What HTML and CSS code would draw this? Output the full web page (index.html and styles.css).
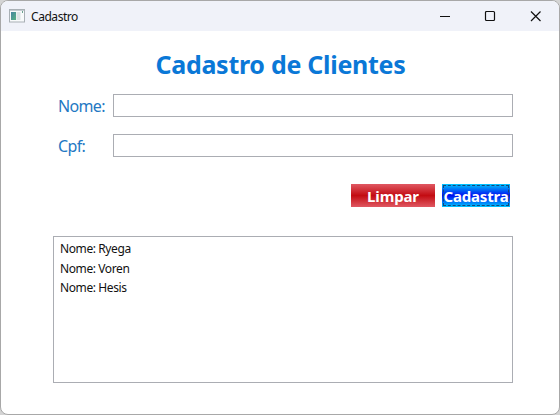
FILE: index.html
```html
<!DOCTYPE html>
<html lang="pt-BR">
<head>
<meta charset="utf-8">
<title>Cadastro</title>
<link rel="stylesheet" href="styles.css">
</head>
<body>
<div class="window">
  <header class="titlebar">
    <svg class="app-icon" width="16" height="14" viewBox="0 0 16 14">
      <defs><linearGradient id="pane" x1="0" y1="0" x2="1" y2="1"><stop offset="0" stop-color="#4584a0"/><stop offset="1" stop-color="#58b283"/></linearGradient></defs>
      <rect x=".5" y=".5" width="15" height="12.5" fill="#f8fafb" stroke="#a9b0b5"/>
      <path d="M1 1.5h14" stroke="#c3cbd0"/>
      <rect x="2" y="3" width="5" height="8" fill="url(#pane)"/>
      <rect x="7.5" y="3" width="4" height="8" fill="#dce3e5"/>
      <path d="M13.5 2v2" stroke="#6aa18f"/>
    </svg>
    <span class="caption">Cadastro</span>
    <svg class="controls" width="104" height="12" viewBox="0 0 104 12">
      <path class="glyph" d="M0 6.5h10"/>
      <rect class="glyph" x="45.5" y="1.5" width="9" height="9" rx="1"/>
      <path class="glyph" d="M91 1.500l9.500 9.500M100.500 1.500l-9.500 9.500"/>
    </svg>
  </header>
  <main class="form">
    <h1>Cadastro de Clientes</h1>
    <div class="field"><label for="nome">Nome:</label><input id="nome" type="text"></div>
    <div class="field"><label for="cpf">Cpf:</label><input id="cpf" type="text"></div>
    <div class="actions">
      <button class="clear">Limpar</button>
      <button class="submit"><span>Cadastra</span></button>
    </div>
    <ul class="list">
      <li>Nome: Ryega</li>
      <li>Nome: Voren</li>
      <li>Nome: Hesis</li>
    </ul>
  </main>
</div>
</body>
</html>
```
FILE: styles.css
```css
* { box-sizing: border-box; }
body { margin: 0; background: #d4d4d4; font-family: "Noto Sans", "Open Sans", sans-serif; }
.window { width: 560px; height: 415px; border: 1px solid #a8a8a8; border-radius: 8px; background: #fff; overflow: hidden; }
.titlebar { display: flex; align-items: center; height: 30px; padding: 0 15px 0 8px; background: #f0f2f9; }
.caption { margin-left: 6px; font-size: 12px; letter-spacing: -0.45px; color: #111; }
.controls { margin-left: auto; }
.glyph { fill: none; stroke: #111; stroke-width: 1.2; }
.form { padding: 15px 46px 0 52px; }
h1 { margin: 0 0 12px; padding-right: 5px; height: 36px; line-height: 36px; font-size: 25px; font-weight: 700; letter-spacing: -0.28px; text-align: center; white-space: nowrap; color: #0a78d7; }
.field { display: flex; align-items: center; height: 23px; margin-bottom: 17px; }
label { width: 60px; padding-left: 5px; font-size: 16px; letter-spacing: -0.65px; color: #2378c3; }
input { width: 400px; height: 23px; border: 1px solid #abadb3; padding: 0 4px; background: #fff; outline: none; }
.actions { display: flex; justify-content: flex-end; gap: 7px; padding: 10px 3px 0 0; }
button { height: 23px; padding: 0; border: 0; font: 700 15px/25px "Noto Sans", sans-serif; letter-spacing: -0.15px; color: #fff; }
.clear { width: 84px; background: linear-gradient(#e05862, #c30c12 50%, #e05862); }
.submit { width: 68px; padding: 1px; letter-spacing: -0.2px; background: linear-gradient(#00c8ff, #0010f0 50%, #00c8ff); }
.submit span { display: flex; align-items: center; justify-content: center; width: 66px; height: 21px; padding-top: 1px; border: 1px dashed #174679; }
.list { height: 147px; margin: 29px 0 0; padding: 2px 6px; border: 1px solid #abadb3; list-style: none; font-size: 12px; line-height: 19.5px; letter-spacing: -0.4px; color: #111; }
```
